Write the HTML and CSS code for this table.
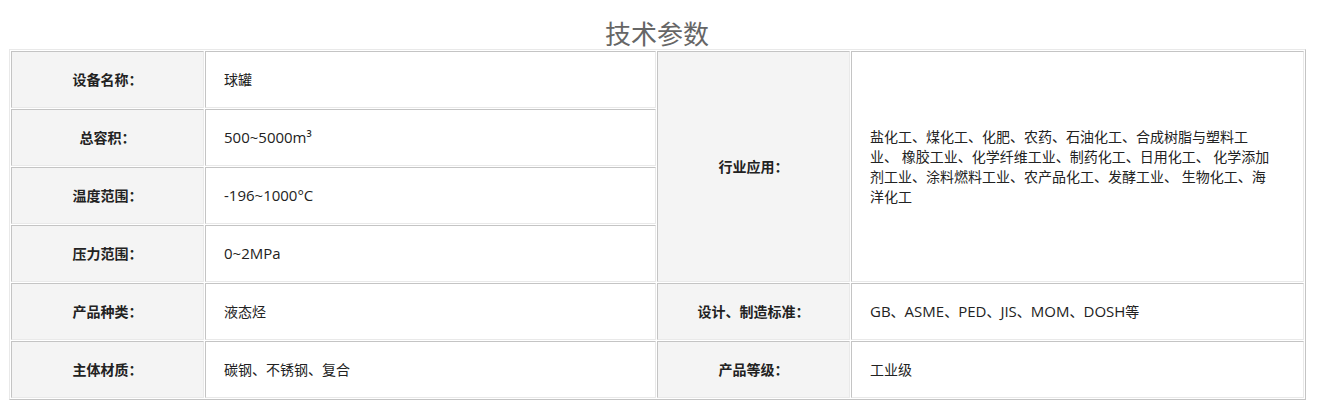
FILE: index.html
```html
<!DOCTYPE html>
<html lang="zh-CN">
<head>
<meta charset="utf-8">
<title>技术参数</title>
<link rel="stylesheet" href="styles.css">
</head>
<body>
<div class="wrap">
  <h2 class="title">技术参数</h2>
  <table class="spec">
    <colgroup>
      <col class="c-label">
      <col class="c-value">
      <col class="c-label">
      <col class="c-value2">
    </colgroup>
    <tbody>
      <tr>
        <td class="label">设备名称：</td>
        <td class="value">球罐</td>
        <td class="label" rowspan="4">行业应用：</td>
        <td class="value long" rowspan="4">盐化工、煤化工、化肥、农药、石油化工、合成树脂与塑料工业、 橡胶工业、化学纤维工业、制药化工、日用化工、 化学添加剂工业、涂料燃料工业、农产品化工、发酵工业、 生物化工、海洋化工</td>
      </tr>
      <tr>
        <td class="label">总容积：</td>
        <td class="value"><span class="en">500~5000m³</span></td>
      </tr>
      <tr>
        <td class="label">温度范围：</td>
        <td class="value"><span class="en">-196~1000°C</span></td>
      </tr>
      <tr>
        <td class="label">压力范围：</td>
        <td class="value"><span class="en">0~2MPa</span></td>
      </tr>
      <tr>
        <td class="label">产品种类：</td>
        <td class="value">液态烃</td>
        <td class="label">设计、制造标准：</td>
        <td class="value"><span class="en">GB</span>、<span class="en">ASME</span>、<span class="en">PED</span>、<span class="en">JIS</span>、<span class="en">MOM</span>、<span class="en">DOSH</span>等</td>
      </tr>
      <tr>
        <td class="label">主体材质：</td>
        <td class="value">碳钢、不锈钢、复合</td>
        <td class="label">产品等级：</td>
        <td class="value">工业级</td>
      </tr>
    </tbody>
  </table>
</div>
</body>
</html>
```

FILE: styles.css
```css
html, body {
  margin: 0;
  padding: 0;
  background: #ffffff;
}

body {
  font-family: "Open Sans", "Noto Sans CJK SC", sans-serif;
  font-size: 14px;
  color: #333333;
}

.wrap {
  padding: 0 12px 0 9px;
}

.title {
  margin: 0;
  padding-top: 18px;
  height: 31px;
  box-sizing: content-box;
  line-height: 30px;
  font-size: 26px;
  font-weight: normal;
  text-align: center;
  color: #666666;
  font-family: "Noto Sans CJK SC", sans-serif;
}

.spec {
  width: 1297px;
  table-layout: fixed;
  border-collapse: separate;
  border-spacing: 1px;
  border-style: solid;
  border-width: 1px;
  border-color: #e9e9e9 #c4c4c4 #c4c4c4 #e9e9e9;
}

.c-label { width: 193px; }
.c-value { width: 451px; }
.c-value2 { width: 453px; }

.spec td {
  box-sizing: border-box;
  height: 57px;
  border-style: solid;
  border-width: 1px;
  border-color: #c4c4c4 #e9e9e9 #e9e9e9 #c4c4c4;
  vertical-align: middle;
  line-height: 20px;
}

.label {
  background: #f4f4f4;
  text-align: center;
  font-weight: bold;
  color: #222222;
  padding: 0;
}

.value {
  background: #ffffff;
  padding: 0 18px;
  text-align: left;
  color: #222222;
}

.en {
  font-size: 15px;
}

.long {
  padding: 0 30px 0 18px;
  line-height: 19.3px;
}
```
